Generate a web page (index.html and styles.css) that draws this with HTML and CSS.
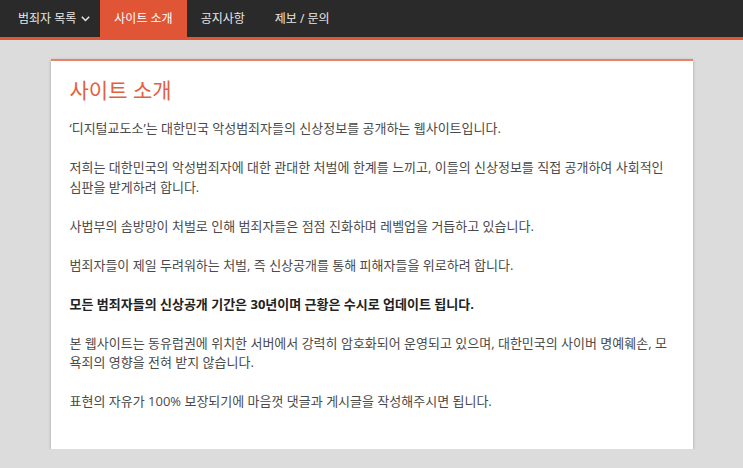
FILE: index.html
```html
<!DOCTYPE html>
<html lang="ko">
<head>
<meta charset="utf-8">
<link rel="stylesheet" href="styles.css">
</head>
<body>
<nav class="navbar">
  <ul class="nav">
    <li class="nav-item dropdown">범죄자 목록 <svg class="caret" width="9" height="6" viewBox="0 0 9 6"><path d="M0.8 0.8 L4.5 4.5 L8.2 0.8" fill="none" stroke="#e8e8e8" stroke-width="1.5"/></svg></li>
    <li class="nav-item active">사이트 소개</li>
    <li class="nav-item">공지사항</li>
    <li class="nav-item">제보 / 문의</li>
  </ul>
</nav>
<main class="container">
  <section class="card">
    <h1 class="title">사이트 소개</h1>
    <p>‘디지털교도소’는 대한민국 악성범죄자들의 신상정보를 공개하는 웹사이트입니다.</p>
    <p>저희는 대한민국의 악성범죄자에 대한 관대한 처벌에 한계를 느끼고, 이들의 신상정보를 직접 공개하여 사회적인 심판을 받게하려 합니다.</p>
    <p>사법부의 솜방망이 처벌로 인해 범죄자들은 점점 진화하며 레벨업을 거듭하고 있습니다.</p>
    <p>범죄자들이 제일 두려워하는 처벌, 즉 신상공개를 통해 피해자들을 위로하려 합니다.</p>
    <p class="strong">모든 범죄자들의 신상공개 기간은 30년이며 근황은 수시로 업데이트 됩니다.</p>
    <p>본 웹사이트는 동유럽권에 위치한 서버에서 강력히 암호화되어 운영되고 있으며, 대한민국의 사이버 명예훼손, 모욕죄의 영향을 전혀 받지 않습니다.</p>
    <p>표현의 자유가 100% 보장되기에 마음껏 댓글과 게시글을 작성해주시면 됩니다.</p>
  </section>
</main>
</body>
</html>
```
FILE: styles.css
```css
* { box-sizing: border-box; }
html, body {
  margin: 0;
  padding: 0;
  background: #dcdcdc;
  font-family: "Open Sans", "Noto Sans CJK KR", sans-serif;
}
.navbar {
  background: #2a2a2a;
  border-bottom: 3px solid #e05535;
  height: 40px;
}
.nav {
  list-style: none;
  margin: 0;
  padding: 0 0 0 4px;
  display: flex;
  height: 37px;
}
.nav-item {
  color: #e8e8e8;
  font-size: 12px;
  line-height: 37px;
  padding: 0 14px;
  display: flex;
  align-items: center;
  gap: 5px;
}
.nav-item.dropdown { padding-right: 10px; }
.nav-item.active {
  background: #e05535;
  color: #fff;
}
.nav-item:nth-child(3) { padding-right: 15px; }
.nav-item:nth-child(4) { padding-left: 15px; }
.caret { margin-top: 1px; }
.container {
  width: 642px;
  margin: 19px auto 0;
}
.card {
  background: #fff;
  border-top: 2px solid #e8836a;
  box-shadow: 0 1px 3px rgba(0,0,0,0.25);
  padding: 14px 20px 16px 19px;
  min-height: 390px;
}
.title {
  color: #e2603f;
  font-weight: 400;
  font-size: 21px;
  line-height: 30px;
  margin: 0 0 14px;
}
.card p {
  color: #4a4a4a;
  font-size: 13px;
  line-height: 19.5px;
  margin: 0 0 19.5px;
}
.card p.strong {
  font-weight: 700;
  color: #222;
}
```
